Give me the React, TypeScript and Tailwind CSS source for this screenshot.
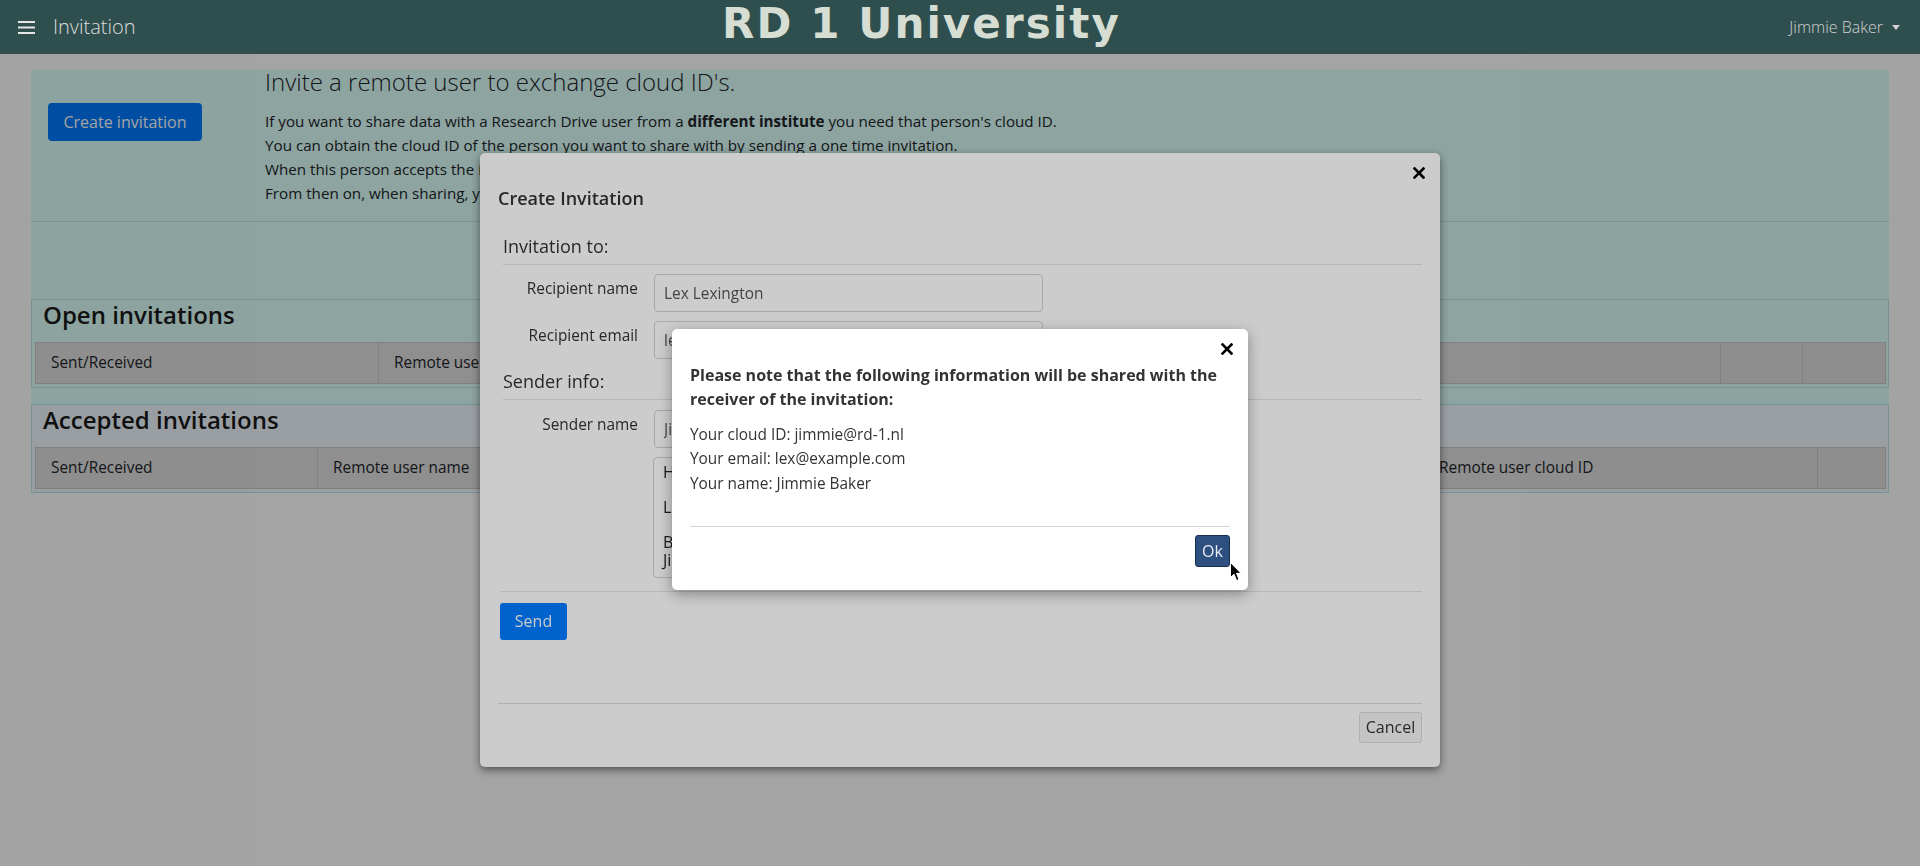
import React from "react";

const openCols = [343, 400, 372, 570, 82, 83];
const openHeads = ["Sent/Received", "Remote user name", "Remote user email", "Remote user cloud ID", "", ""];
const acceptedCols = [282, 400, 350, 356, 394, 68];
const acceptedHeads = [
  "Sent/Received",
  "Remote user name",
  "Remote user email",
  "Remote user institute",
  "Remote user cloud ID",
  "",
];

function CloseIcon() {
  return (
    <svg width="12" height="12" viewBox="0 0 12 12" className="block">
      <path d="M1.5 1.5 L10.5 10.5 M10.5 1.5 L1.5 10.5" stroke="#000" strokeWidth="2.6" strokeLinecap="square" />
    </svg>
  );
}

function InvitationTable({ cols, heads }: { cols: number[]; heads: string[] }) {
  return (
    <table className="mx-[3px] mb-[3px] w-[1850px] table-fixed border-collapse">
      <colgroup>
        {cols.map((w, i) => (
          <col key={i} style={{ width: w }} />
        ))}
      </colgroup>
      <thead>
        <tr className="bg-[#dfdfdf]">
          {heads.map((h, i) => (
            <th
              key={i}
              className="h-[41px] border border-[#c8c8c8] px-[15px] text-left text-[15.4px] font-normal leading-[24px] text-[#212529] whitespace-nowrap overflow-hidden"
            >
              {h}
            </th>
          ))}
        </tr>
      </thead>
    </table>
  );
}

function FormRow({ label, value }: { label: string; value: string }) {
  return (
    <div className="flex items-start">
      <label className="w-[140px] pt-[3px] text-right text-[15.4px] leading-[24px] text-[#333]">{label}</label>
      <input
        readOnly
        defaultValue={value}
        className="ml-[16px] h-[38px] w-[389px] rounded-[4px] border border-[#ced4da] bg-white px-[9px] text-[15.4px] text-[#555] outline-none"
      />
    </div>
  );
}

export default function App() {
  return (
    <div className="relative min-h-screen bg-white font-['Open_Sans',sans-serif] text-[#212529]">
      <nav className="relative z-[70] flex h-[54px] items-center bg-[#2f4f4f]">
        <div className="flex w-[722px] items-center">
          <svg width="17" height="13" viewBox="0 0 17 13" className="ml-[18px] block">
            <rect x="0" y="0" width="17" height="2" fill="#e6e6e6" />
            <rect x="0" y="5.5" width="17" height="2" fill="#e6e6e6" />
            <rect x="0" y="11" width="17" height="2" fill="#e6e6e6" />
          </svg>
          <span className="ml-[18px] text-[20px] font-light leading-[28px] text-[#dcdcdc]">Invitation</span>
        </div>
        <span className="mb-[7px] font-['DejaVu_Sans',sans-serif] text-[42px] font-bold leading-[40px] tracking-[2.1px] text-[#d6ddd3]">
          RD 1 University
        </span>
        <div className="ml-auto flex items-center pr-[20px] text-[16px] font-light leading-[24px] text-[#cfcfcf]">
          Jimmie Baker
          <span className="ml-[9px] h-0 w-0 border-x-[4px] border-t-[5px] border-x-transparent border-t-[#cfcfcf]" />
        </div>
      </nav>

      <main className="px-[31px] pt-[15px]">
        <div className="bg-[#ddfffb]">
          <section className="flex border-b border-[#c4e3df] pb-[16px]">
            <div className="w-[234px]">
              <button className="ml-[17px] mt-[34px] h-[38px] w-[154px] rounded-[4px] bg-[#007bff] text-[16px] leading-[24px] text-white">
                Create invitation
              </button>
            </div>
            <div>
              <h2 className="mb-[14px] text-[24px] font-light leading-[26px] text-[#212529]">
                Invite a remote user to exchange cloud ID's.
              </h2>
              <p className="text-[15.2px] leading-[24px] text-[#212529]">
                If you want to share data with a Research Drive user from a <b>different institute</b> you need that
                person's cloud ID.
                <br />
                You can obtain the cloud ID of the person you want to share with by sending a one time invitation.
                <br />
                When this person accepts the invitation, your cloud ID's will be exchanged automatically.
                <br />
                From then on, when sharing, you can simply search for this person by name or email address.
              </p>
            </div>
          </section>
          <div className="h-[77px]" />

          <section className="border border-[#b8e6ea]">
            <h3 className="mb-[13px] px-[11px] text-[24px] font-semibold leading-[29px] text-[#1a1a1a]">
              Open invitations
            </h3>
            <InvitationTable cols={openCols} heads={openHeads} />
          </section>
          <div className="h-[16px]" />
          <section className="border border-[#b8e6ea] bg-[#f0f8ff]">
            <h3 className="mb-[13px] px-[11px] text-[24px] font-semibold leading-[29px] text-[#1a1a1a]">
              Accepted invitations
            </h3>
            <InvitationTable cols={acceptedCols} heads={acceptedHeads} />
          </section>
        </div>
      </main>

      {/* first backdrop + create invitation modal */}
      <div className="fixed inset-0 z-10 bg-[rgba(0,0,0,0.2)]" />
      <div className="fixed inset-0 z-20 flex justify-center pt-[153px]">
        <div className="h-fit w-[960px] rounded-[5px] bg-white text-[#333] shadow-[0_3px_9px_rgba(0,0,0,0.5)]">
          <div className="px-[18px] pt-[14px]">
            <div className="flex justify-end">
              <button className="mr-[-3px]">
                <CloseIcon />
              </button>
            </div>
            <h4 className="mt-[5.5px] text-[18px] font-semibold leading-[27px]">Create Invitation</h4>
          </div>

          <div className="px-[18px]">
            <div className="ml-[5px] mt-[21px] border-b border-[#e5e5e5] pb-[4px] text-[18px] leading-[27px]">
              Invitation to:
            </div>
            <div className="mt-[9.5px]">
              <FormRow label="Recipient name" value="Lex Lexington" />
            </div>
            <div className="mt-[9px]">
              <FormRow label="Recipient email" value="lex@example.com" />
            </div>
            <div className="ml-[5px] mt-[9.4px] border-b border-[#e5e5e5] pb-[4px] text-[18px] leading-[27px]">
              Sender info:
            </div>
            <div className="mt-[10px]">
              <FormRow label="Sender name" value="Jimmie Baker" />
            </div>
            <div className="mt-[8.6px] flex">
              <div className="w-[140px]" />
              <textarea
                readOnly
                defaultValue={"Hi Lex Lexington,\n\nLet's exchange cloud ID's.\n\nBest regards,\nJimmie Baker"}
                className="ml-[15px] h-[121px] w-[389px] resize-none overflow-hidden rounded-[4px] border border-[#ced4da] bg-white px-[9px] py-[6px] text-[16px] leading-[17.6px] text-[#222] outline-none"
              />
            </div>
            <div className="ml-[2px] mt-[13px] border-t border-[#e5e5e5]" />
            <button className="ml-[2px] mt-[11px] h-[37px] w-[67px] rounded-[3px] bg-[#007bff] text-[16px] text-white">
              Send
            </button>
            <div className="h-[63px]" />
          </div>

          <div className="mx-[18px] flex justify-end border-t border-[#dcdcdc] pb-[24px] pt-[8px]">
            <button className="h-[31px] w-[63px] rounded-[3px] border border-[#dcdcdc] bg-[#f5f5f5] text-[16px] text-[#333]">
              Cancel
            </button>
          </div>
        </div>
      </div>

      {/* second backdrop + confirmation dialog */}
      <div className="fixed inset-0 z-30 bg-[rgba(0,0,0,0.2)]" />
      <div className="fixed inset-0 z-40 flex justify-center pt-[329px]">
        <div className="h-fit w-[576px] rounded-[5px] bg-white text-[#333] shadow-[0_4px_14px_rgba(0,0,0,0.35)]">
          <div className="flex justify-end pr-[15px] pt-[14px]">
            <button>
              <CloseIcon />
            </button>
          </div>
          <div className="px-[18px]">
            <p className="mt-[8px] text-[16px] font-bold leading-[24px]">
              Please note that the following information will be shared with the receiver of the invitation:
            </p>
            <div className="mt-[11.5px] text-[15.4px] leading-[24.5px]">
              <div>Your cloud ID: jimmie@rd-1.nl</div>
              <div>Your email: lex@example.com</div>
              <div>Your name: Jimmie Baker</div>
            </div>
            <div className="mt-[30px] border-t border-[#d6d6d6]" />
            <div className="flex justify-end pb-[23px] pt-[8px]">
              <button className="h-[32px] w-[35px] rounded-[3px] border border-[#17304f] bg-[#2e5080] text-[16px] text-[#e8edf3]">
                Ok
              </button>
            </div>
          </div>
        </div>
      </div>

      {/* mouse pointer over the Ok button */}
      <svg width="13" height="20" viewBox="0 0 13 20" className="fixed left-[1230px] top-[562px] z-50">
        <path d="M0.5 0.5 L0.5 15.5 L4 12.2 L6.6 18.5 L9 17.5 L6.5 11.3 L11 11.3 Z" fill="#000" stroke="#fff" strokeWidth="1" />
      </svg>
    </div>
  );
}
